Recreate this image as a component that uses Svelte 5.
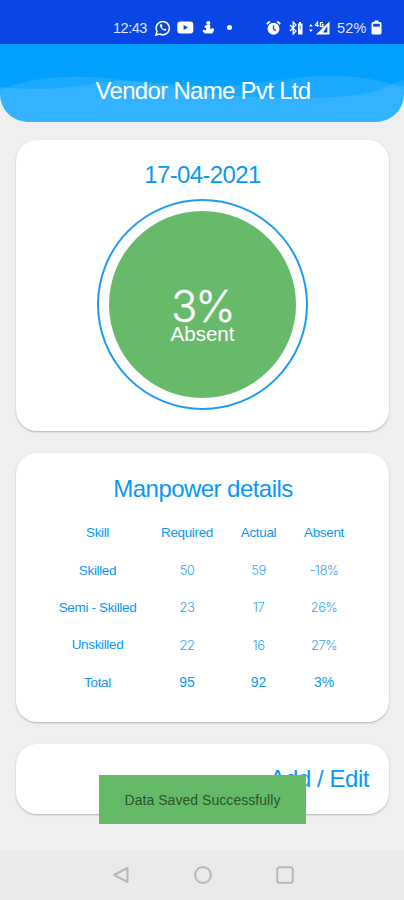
<script>
  const heads = ['Skill', 'Required', 'Actual', 'Absent'];
  const rows = [
    ['Skilled', '50', '59', '-18%'],
    ['Semi - Skilled', '23', '17', '26%'],
    ['Unskilled', '22', '16', '27%'],
    ['Total', '95', '92', '3%']
  ];
</script>

<div class="screen">
  <div class="status">
    <span class="time">12:43</span>
    <svg class="ic wa" width="16" height="16" viewBox="0 0 16 16" fill="none" stroke="#fff" stroke-width="1.5">
      <path d="M1 15l1-3.6A6.6 6.6 0 1 1 4.700 14z" />
      <path d="M5.300 4.300c-.9.9-.5 2.500 1.300 4.400s3.700 2.500 4.700 1.500l.3-.8-1.700-1-.9.8c-.9-.3-1.800-1.200-2.200-2.200l.7-.8-.8-1.900z" fill="#fff" stroke="none" />
    </svg>
    <svg class="ic yt" width="17" height="13" viewBox="0 0 17 13">
      <rect x=".3" y=".5" width="16" height="12" rx="3.200" fill="#fff" />
      <path d="M6.600 4v5l4.400-2.500z" fill="#0a45e6" />
    </svg>
    <svg class="ic boat" width="13" height="15" viewBox="0 0 13 15" fill="#fff">
      <circle cx="6.300" cy="3" r="2.100" />
      <path d="M4 5h4.200v4l3-1 1 2-1.800 3.500H3L.6 11.500 1 9.700l3 .5V8L2 7z" />
    </svg>
    <span class="dot"></span>
    <svg class="ic alarm" width="15" height="16" viewBox="0 0 15 16" fill="none" stroke="#fff">
      <circle cx="7.500" cy="8.800" r="6" fill="#fff" stroke="none" />
      <path d="M.8 4l3-2.600M14.200 4l-3-2.600" stroke-width="2" />
      <path d="M7.500 5.500V9l2.400 1.600" stroke="#0a45e6" stroke-width="1.300" />
    </svg>
    <svg class="ic bt" width="14" height="14" viewBox="0 0 14 14" fill="none" stroke="#fff">
      <path d="M1 4l6 6-2.800 3V1L7 4l-6 6" stroke-width="1.300" />
      <path d="M9 2.500h1V1h2v1.500h1.500v11H9z" fill="#fff" stroke="none" />
      <path d="M11.200 4.500v4" stroke="#0a45e6" stroke-width=".8" />
    </svg>
    <svg class="ic sig" width="21" height="14" viewBox="0 0 21 14" fill="#fff">
      <path d="M0 5.500L1.900 3l1.900 2.500zM0 8.500L1.900 11l1.900-2.500z" />
      <path d="M20.500.5v13H7z" />
      <path d="M6 4.500L8.500 1v5M6 4.500h4M14 1.600h-2.600v4H14V3.700h-1.200" fill="none" stroke="#fff" stroke-width="1.200" />
      <path d="M18.300 5v6.500H14z" fill="#0a45e6" />
    </svg>
    <span class="pct">52%</span>
    <svg class="ic bat" width="11" height="15" viewBox="0 0 11 15">
      <path d="M3.500.5h4V2H9q1.500 0 1.500 1.500V13q0 1.500-1.500 1.500H2Q.5 14.500.5 13V3.500Q.5 2 2 2h1.500z" fill="#fff" />
      <path d="M2.200 3.800h6.600v2.900H2.200z" fill="#0a45e6" />
    </svg>
  </div>

  <header>
    <svg class="waves" width="404" height="78" viewBox="0 0 404 78">
      <path d="M0 46C35 31 80 30 130 37S230 56 310 54S380 42 404 36V78H0z" fill="#fff" opacity=".1" />
      <path d="M0 43C40 48 75 43 110 38S190 46 240 41S310 29 355 33C380 36 390 40 404 43V78H0z" fill="#fff" opacity=".1" />
    </svg>
    <h1>Vendor Name Pvt Ltd</h1>
  </header>

  <main>
    <section class="card summary">
      <div class="date">17-04-2021</div>
      <div class="ring">
        <div class="disc">
          <div class="big">3%</div>
          <div class="label">Absent</div>
        </div>
      </div>
    </section>

    <section class="card details">
      <h2>Manpower details</h2>
      <div class="table">
        {#each heads as h}<span class="name">{h}</span>{/each}
        {#each rows as row, r}
          {#each row as cell, c}
            <span class:name={c === 0} class:total={c > 0 && r === 3} class:value={c > 0 && r < 3}>{cell}</span>
          {/each}
        {/each}
      </div>
    </section>

    <section class="card action"><span>Add / Edit</span></section>
  </main>

  <nav>
    <svg width="18" height="18" viewBox="0 0 18 18"><path d="M15.500 2v14L2 9z" /></svg>
    <svg width="18" height="18" viewBox="0 0 18 18"><circle cx="9" cy="9" r="7.900" /></svg>
    <svg width="18" height="18" viewBox="0 0 18 18"><rect x="1.200" y="1.200" width="15.600" height="15.600" rx="2.500" /></svg>
  </nav>

  <div class="toast">Data Saved Successfully</div>
</div>

<style>
  :global(body) { margin: 0; }
  .screen {
    position: relative;
    display: flex;
    flex-direction: column;
    width: 404px;
    height: 900px;
    overflow: hidden;
    background: #efefef;
    font-family: "Liberation Sans", Arial, sans-serif;
    color: #0b98f5;
    white-space: nowrap;
  }
  .status {
    display: flex;
    align-items: center;
    box-sizing: border-box;
    height: 44px;
    padding: 11px 0 0 113px;
    background: #0a45e6;
    color: #dfe8ff;
    font-size: 14.500px;
    flex: none;
  }
  .ic { flex: none; display: block; }
  .time { width: 42px; letter-spacing: -0.500px; }
  .yt { margin-left: 6px; }
  .boat { margin-left: 8px; }
  .dot { width: 5px; height: 5px; border-radius: 50%; background: #fff; margin-left: 12px; }
  .alarm { margin-left: 34px; }
  .bt { margin-left: 8px; }
  .sig { margin-left: 6px; }
  .pct { width: 34px; margin-left: 7px; letter-spacing: 0.200px; }
  header {
    display: grid;
    height: 78px;
    flex: none;
    overflow: hidden;
    border-radius: 0 0 28px 28px;
    background: #02a1ff;
  }
  .waves, h1 { grid-area: 1 / 1; }
  h1 {
    z-index: 1;
    margin: 33px 0 0 2px;
    text-align: center;
    font-size: 24px;
    line-height: 28px;
    font-weight: 400;
    letter-spacing: -0.700px;
    color: #fff;
  }
  main {
    display: flex;
    flex-direction: column;
    gap: 22px;
    padding: 18px 15px 0 16px;
    flex: 1;
  }
  .card {
    box-sizing: border-box;
    border-radius: 21px;
    background: #fff;
    box-shadow: 0 1px 2px rgba(0, 0, 0, 0.25);
  }
  .summary {
    display: flex;
    flex-direction: column;
    align-items: center;
    height: 291px;
    padding-top: 21px;
  }
  .date { font-size: 24px; line-height: 28px; letter-spacing: -0.650px; }
  .ring {
    display: grid;
    place-items: center;
    box-sizing: border-box;
    width: 211px;
    height: 211px;
    margin-top: 10px;
    border: 2px solid #1b9cf5;
    border-radius: 50%;
  }
  .disc {
    display: flex;
    flex-direction: column;
    align-items: center;
    box-sizing: border-box;
    width: 187px;
    height: 187px;
    padding-top: 78px;
    border-radius: 50%;
    background: #68ba6b;
    color: #fff;
  }
  .big { font: 300 43px/34px Inter, sans-serif; letter-spacing: -2px; -webkit-text-stroke: 0.400px #fff; }
  .label { font-size: 20.500px; line-height: 22px; }
  .details { height: 269px; padding-top: 22px; }
  h2 {
    margin: 0 0 0 1px;
    text-align: center;
    font-size: 24px;
    line-height: 28px;
    font-weight: 400;
    letter-spacing: -0.550px;
  }
  .table {
    display: grid;
    grid-template-columns: 99px 80px 63px 68px;
    grid-auto-rows: 37.400px;
    align-items: center;
    text-align: center;
    margin: 11px 0 0 32px;
    font-size: 13.500px;
  }
  .name { letter-spacing: -0.350px; }
  .value { color: #2fa6f6; font: 300 13px Inter, sans-serif; letter-spacing: -0.500px; }
  .total { font-size: 14px; }
  .action {
    display: flex;
    justify-content: flex-end;
    align-items: center;
    height: 70px;
    padding-right: 20px;
    font-size: 24px;
    letter-spacing: -0.450px;
  }
  nav {
    display: flex;
    align-items: center;
    justify-content: center;
    gap: 64px;
    height: 50px;
    flex: none;
    padding-left: 1px;
    background: #eaeaea;
  }
  nav svg { fill: none; stroke: #b8b8b8; stroke-width: 2; stroke-linejoin: round; }
  .toast {
    position: absolute;
    left: 99px;
    top: 775px;
    width: 207px;
    height: 49px;
    line-height: 50px;
    text-align: center;
    background: #65ba68;
    color: #2c532e;
    font-size: 14px;
    letter-spacing: 0.050px;
  }
</style>
